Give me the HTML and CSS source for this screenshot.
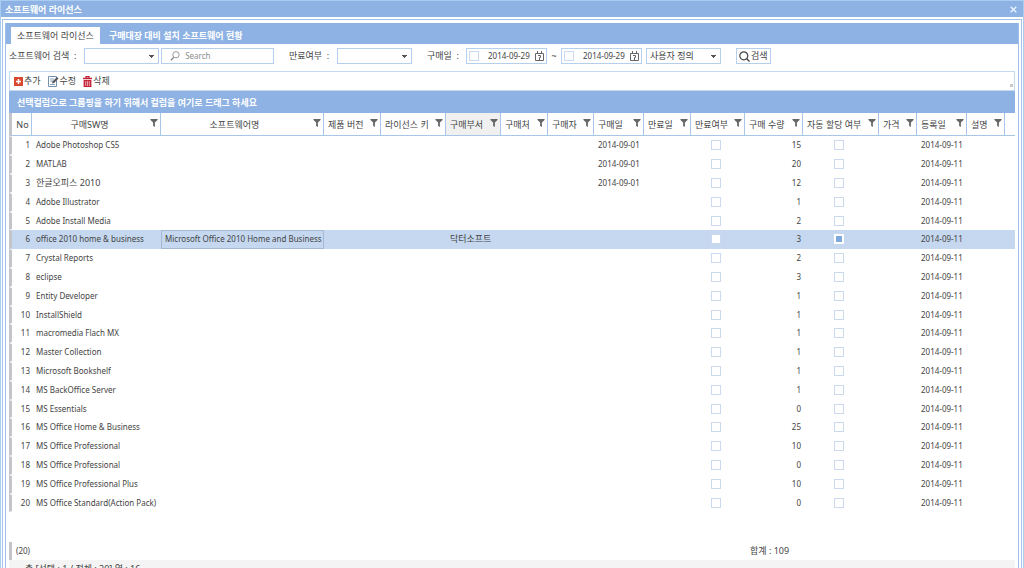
FILE: index.html
```html
<!DOCTYPE html>
<html lang="ko">
<head>
<meta charset="utf-8">
<title>소프트웨어 라이선스</title>
<link rel="stylesheet" href="styles.css">
</head>
<body>
<svg class="defs" aria-hidden="true">
  <symbol id="funnel" viewBox="0 0 8 9"><path d="M0 0h8v1L5 4v5L3 8V4L0 1z" fill="#666"/></symbol>
  <symbol id="calendar" viewBox="0 0 9 10"><path d="M.5 2.500h8v7h-8zM2.500 0v3M6.500 0v3M3 4.500h2.500v2H4.500V9" fill="none" stroke="#666"/></symbol>
</svg>
<div class="window">
  <header class="titlebar">
    <h1>소프트웨어 라이선스</h1>
    <button class="close" aria-label="닫기"><svg width="7" height="7" viewBox="0 0 7 7"><path d="M.7.7l5.600 5.600M6.300.7L.7 6.300" stroke="#e6f2ff" stroke-width="1.500"/></svg></button>
  </header>
  <div class="frame">
    <main class="panel">
      <nav class="tabs">
        <button class="tab active">소프트웨어 라이선스</button>
        <button class="tab">구매대장 대비 설치 소프트웨어 현황</button>
      </nav>
      <form class="filters">
        <label class="name" for="kind">소프트웨어 검색 &nbsp;:</label>
        <select id="kind" class="box kind"><option></option></select>
        <span class="box search">
          <svg width="12" height="12" viewBox="0 0 12 12"><circle cx="7" cy="4.500" r="3.700" fill="none" stroke="#888"/><path d="M4.500 7.500L1 11" stroke="#888" stroke-width="1.500"/></svg>
          <input type="text" aria-label="Search" placeholder="Search">
        </span>
        <label class="name expiry" for="expired">만료여부 &nbsp;:</label>
        <select id="expired" class="box kind"><option></option></select>
        <span class="name bought">구매일 &nbsp;:</span>
        <span class="box date"><input type="checkbox" aria-label="시작일 사용"><input type="text" aria-label="시작일" value="2014-09-29"><svg width="9" height="10"><use href="#calendar"/></svg></span>
        <span class="tilde">~</span>
        <span class="box date"><input type="checkbox" aria-label="종료일 사용"><input type="text" aria-label="종료일" value="2014-09-29"><svg width="9" height="10"><use href="#calendar"/></svg></span>
        <select class="box range" aria-label="기간"><option>사용자 정의</option></select>
        <button type="button" class="box find"><svg width="11" height="11" viewBox="0 0 11 11"><circle cx="4.800" cy="4.800" r="4" fill="none" stroke="#444" stroke-width="1.200"/><path d="M7.500 7.500l3 3" stroke="#444" stroke-width="1.400"/></svg>검색</button>
      </form>
      <div class="toolbar">
        <button><svg width="9" height="9" viewBox="0 0 9 9"><path d="M0 0h9v9H0z" fill="#d9472f"/><path d="M4.500 2v5M2 4.500h5" stroke="#fff" stroke-width="1.500"/></svg>추가</button>
        <button><svg width="11" height="11" viewBox="0 0 11 11"><path d="M.5.5h8v10h-8z" fill="#fff" stroke="#7590ad"/><path d="M2 3h4M2 5h3M2 8.500h5" stroke="#8ba4bd"/><path d="M4 7.500l.5-2L9 1l1.500 1.500L6 7z" fill="#555"/></svg>수정</button>
        <button><svg width="9" height="11" viewBox="0 0 9 11"><path d="M0 2.500h9M3 2V.6h3V2" fill="none" stroke="#c3243a" stroke-width="1.300"/><path d="M.6 4h7.800v7H.6z" fill="#c3243a"/><path d="M2.700 5v5M4.500 5v5M6.300 5v5" stroke="#f3c4ca" stroke-width=".8"/></svg>삭제</button>
        <span class="grip"></span>
      </div>
      <div class="group">선택컬럼으로 그룹핑을 하기 위해서 컬럼을 여기로 드래그 하세요</div>
      <table class="grid">
        <colgroup><col class="w-no"><col class="w-sw"><col class="w-name"><col class="w-ver"><col class="w-key"><col class="w-dept"><col class="w-from"><col class="w-who"><col class="w-day"><col class="w-exp"><col class="w-flag"><col class="w-qty"><col class="w-auto"><col class="w-price"><col class="w-day"><col class="w-note"><col></colgroup>
        <thead>
          <tr>
            <th><div>No</div></th>
            <th><div>구매SW명<svg><use href="#funnel"/></svg></div></th>
            <th><div>소프트웨어명<svg><use href="#funnel"/></svg></div></th>
            <th><div>제품 버전<svg><use href="#funnel"/></svg></div></th>
            <th><div>라이선스 키<svg><use href="#funnel"/></svg></div></th>
            <th class="hover"><div>구매부서<svg><use href="#funnel"/></svg></div></th>
            <th><div>구매처<svg><use href="#funnel"/></svg></div></th>
            <th><div>구매자<svg><use href="#funnel"/></svg></div></th>
            <th><div>구매일<svg><use href="#funnel"/></svg></div></th>
            <th><div>만료일<svg><use href="#funnel"/></svg></div></th>
            <th><div>만료여부<svg><use href="#funnel"/></svg></div></th>
            <th><div>구매 수량<svg><use href="#funnel"/></svg></div></th>
            <th><div>자동 할당 여부<svg><use href="#funnel"/></svg></div></th>
            <th><div>가격<svg><use href="#funnel"/></svg></div></th>
            <th><div>등록일<svg><use href="#funnel"/></svg></div></th>
            <th><div>설명<svg><use href="#funnel"/></svg></div></th>
            <th></th>
          </tr>
        </thead>
        <tbody>
          <tr><td>1<td>Adobe Photoshop CS5<td><td><td><td><td><td><td>2014-09-01<td><td><input type="checkbox" aria-label="만료여부"><td>15<td><input type="checkbox" aria-label="자동 할당 여부"><td><td>2014-09-11<td><td></tr>
          <tr><td>2<td>MATLAB<td><td><td><td><td><td><td>2014-09-01<td><td><input type="checkbox" aria-label="만료여부"><td>20<td><input type="checkbox" aria-label="자동 할당 여부"><td><td>2014-09-11<td><td></tr>
          <tr><td>3<td class="hangul">한글오피스 2010<td><td><td><td><td><td><td>2014-09-01<td><td><input type="checkbox" aria-label="만료여부"><td>12<td><input type="checkbox" aria-label="자동 할당 여부"><td><td>2014-09-11<td><td></tr>
          <tr><td>4<td>Adobe Illustrator<td><td><td><td><td><td><td><td><td><input type="checkbox" aria-label="만료여부"><td>1<td><input type="checkbox" aria-label="자동 할당 여부"><td><td>2014-09-11<td><td></tr>
          <tr><td>5<td>Adobe Install Media<td><td><td><td><td><td><td><td><td><input type="checkbox" aria-label="만료여부"><td>2<td><input type="checkbox" aria-label="자동 할당 여부"><td><td>2014-09-11<td><td></tr>
          <tr class="selected"><td>6<td>office 2010 home &amp; business<td class="focus">Microsoft Office 2010 Home and Business<td><td><td class="hangul">닥터소프트<td><td><td><td><td><input type="checkbox" aria-label="만료여부"><td>3<td><input type="checkbox" checked aria-label="자동 할당 여부"><td><td>2014-09-11<td><td></tr>
          <tr><td>7<td>Crystal Reports<td><td><td><td><td><td><td><td><td><input type="checkbox" aria-label="만료여부"><td>2<td><input type="checkbox" aria-label="자동 할당 여부"><td><td>2014-09-11<td><td></tr>
          <tr><td>8<td>eclipse<td><td><td><td><td><td><td><td><td><input type="checkbox" aria-label="만료여부"><td>3<td><input type="checkbox" aria-label="자동 할당 여부"><td><td>2014-09-11<td><td></tr>
          <tr><td>9<td>Entity Developer<td><td><td><td><td><td><td><td><td><input type="checkbox" aria-label="만료여부"><td>1<td><input type="checkbox" aria-label="자동 할당 여부"><td><td>2014-09-11<td><td></tr>
          <tr><td>10<td>InstallShield<td><td><td><td><td><td><td><td><td><input type="checkbox" aria-label="만료여부"><td>1<td><input type="checkbox" aria-label="자동 할당 여부"><td><td>2014-09-11<td><td></tr>
          <tr><td>11<td>macromedia Flach MX<td><td><td><td><td><td><td><td><td><input type="checkbox" aria-label="만료여부"><td>1<td><input type="checkbox" aria-label="자동 할당 여부"><td><td>2014-09-11<td><td></tr>
          <tr><td>12<td>Master Collection<td><td><td><td><td><td><td><td><td><input type="checkbox" aria-label="만료여부"><td>1<td><input type="checkbox" aria-label="자동 할당 여부"><td><td>2014-09-11<td><td></tr>
          <tr><td>13<td>Microsoft Bookshelf<td><td><td><td><td><td><td><td><td><input type="checkbox" aria-label="만료여부"><td>1<td><input type="checkbox" aria-label="자동 할당 여부"><td><td>2014-09-11<td><td></tr>
          <tr><td>14<td>MS BackOffice Server<td><td><td><td><td><td><td><td><td><input type="checkbox" aria-label="만료여부"><td>1<td><input type="checkbox" aria-label="자동 할당 여부"><td><td>2014-09-11<td><td></tr>
          <tr><td>15<td>MS Essentials<td><td><td><td><td><td><td><td><td><input type="checkbox" aria-label="만료여부"><td>0<td><input type="checkbox" aria-label="자동 할당 여부"><td><td>2014-09-11<td><td></tr>
          <tr><td>16<td>MS Office Home &amp; Business<td><td><td><td><td><td><td><td><td><input type="checkbox" aria-label="만료여부"><td>25<td><input type="checkbox" aria-label="자동 할당 여부"><td><td>2014-09-11<td><td></tr>
          <tr><td>17<td>MS Office Professional<td><td><td><td><td><td><td><td><td><input type="checkbox" aria-label="만료여부"><td>10<td><input type="checkbox" aria-label="자동 할당 여부"><td><td>2014-09-11<td><td></tr>
          <tr><td>18<td>MS Office Professional<td><td><td><td><td><td><td><td><td><input type="checkbox" aria-label="만료여부"><td>0<td><input type="checkbox" aria-label="자동 할당 여부"><td><td>2014-09-11<td><td></tr>
          <tr><td>19<td>MS Office Professional Plus<td><td><td><td><td><td><td><td><td><input type="checkbox" aria-label="만료여부"><td>10<td><input type="checkbox" aria-label="자동 할당 여부"><td><td>2014-09-11<td><td></tr>
          <tr><td>20<td>MS Office Standard(Action Pack)<td><td><td><td><td><td><td><td><td><input type="checkbox" aria-label="만료여부"><td>0<td><input type="checkbox" aria-label="자동 할당 여부"><td><td>2014-09-11<td><td></tr>
        </tbody>
      </table>
      <div class="summary"><span class="count">(20)</span><span class="total">합계 : 109</span></div>
      <footer class="status">총 [선택 : 1 / 전체 : 20] 열 : 16</footer>
    </main>
  </div>
</div>
</body>
</html>
```
FILE: styles.css
```css
* { box-sizing: border-box; }
body {
  margin: 0;
  height: 100vh;
  overflow: hidden;
  background: #fff;
  color: #444;
  font: 9px/12px "Noto Sans", "Noto Sans CJK KR", sans-serif;
}
button, input, select { font: inherit; color: inherit; margin: 0; }
button { border: 0; padding: 0; background: none; white-space: nowrap; }
.defs { position: absolute; width: 0; height: 0; }
.window { border: 1px solid #a9cdf0; border-width: 1px 1px 0; }
.titlebar {
  display: flex;
  align-items: center;
  justify-content: space-between;
  height: 16px;
  padding: 1px 6px 0 4px;
  background: #8db2e3;
  color: #fff;
}
.titlebar h1 { margin: 0; font-size: 9px; font-weight: 700; }
.close { display: flex; }
.frame {
  margin: 2px 1px 0;
  padding: 3px 2px 0;
  border: 1px solid #a3c3ea;
  border-bottom: 0;
}
.panel { border: 1px solid #9dbfe8; border-width: 0 1px; }
.tabs { display: flex; align-items: flex-end; height: 21px; padding-left: 5px; background: #8db2e3; }
.tab { height: 17px; padding: 1px 9px 0 5px; color: #fff; font-weight: 700; }
.tab.active { padding: 1px 6px 0; margin-right: 4px; background: #fff; color: #444; font-weight: 400; }
.filters { display: flex; align-items: center; height: 27px; padding: 0 3px 3px; }
.name { width: 75px; white-space: nowrap; }
.expiry { width: 48px; margin-left: 15px; }
.bought { width: 39px; margin-left: 15px; }
.box { display: flex; align-items: center; height: 16px; border: 1px solid #b5cfee; background: #fff; }
select.box {
  appearance: none;
  border-radius: 0;
  padding: 0 12px 0 3px;
  background: linear-gradient(#555, #555) right 4px top 6px / 5px 1px no-repeat, linear-gradient(#555, #555) right 5px top 7px / 3px 1px no-repeat, linear-gradient(#555, #555) right 6px top 8px / 1px 1px no-repeat, #fff;
}
.kind { width: 75px; }
.search { width: 113px; margin-left: 2px; padding-left: 8px; gap: 5px; }
.search input, .date input[type="text"] { min-width: 0; width: 100%; border: 0; padding: 0; background: none; outline: 0; font-size: 8px; }
.search input::placeholder { color: #8d8d8d; }
.date { width: 81px; padding: 0 2px; gap: 9px; }
.date svg { flex: none; margin-left: -7px; }
.tilde { width: 14px; text-align: center; }
.range { width: 75px; margin-left: 4px; }
.find { margin-left: 15px; padding: 0 2px; gap: 1px; }
input[type="checkbox"] {
  appearance: none;
  display: block;
  flex: none;
  width: 10px;
  height: 10px;
  border: 1px solid #ccdaee;
  background: #fff;
}
input[type="checkbox"]:checked { border: 2px solid #fff; background: #7fa8dc; }
.toolbar {
  display: flex;
  align-items: center;
  gap: 7px;
  height: 20px;
  margin: 0 3px;
  padding: 0 4px;
  border: 1px solid #c5d9f1;
}
.toolbar button { display: flex; align-items: center; gap: 1px; }
.grip { width: 3px; height: 3px; margin: 8px -3px 0 auto; background: #c8c8c8; }
.group { height: 22px; margin: 0 3px; padding: 1px 8px 0; background: #8db2e3; color: #fff; font-weight: 700; line-height: 22px; }
.grid { table-layout: fixed; width: calc(100% - 6px); margin: 0 3px; border-collapse: separate; border-spacing: 0; }
.grid th { height: 23px; padding: 0; border: 1px solid #a9c6ea; border-width: 0 1px 1px 0; font-weight: 400; }
.grid th:last-child { border-right: 0; }
.grid th div { display: flex; align-items: center; justify-content: center; padding: 1px 2px 0 4px; white-space: nowrap; }
.grid th svg { flex: none; width: 8px; height: 8px; margin: 0 0 3px auto; }
.grid th:nth-child(2) div, .grid th:nth-child(3) div { padding-left: 30%; }
.grid .hover { background: #f0f0f0; }
.grid td { height: 19px; padding: 0 4px 1px; white-space: nowrap; border: 1px solid transparent; border-width: 1px 0; font-size: 8px; line-height: 12px; }
.grid tr:nth-child(5n) td { height: 18px; }
.grid .hangul { font-size: 9px; }
.grid th:first-child, .grid td:first-child, .summary { border-left: 3px solid #c3c5ca; }
.grid td:first-child { padding: 0 2px 1px 0; text-align: right; }
.grid td:nth-child(11), .grid td:nth-child(13) { padding: 0 8px 1px 4px; }
.grid td:nth-child(11) input, .grid td:nth-child(13) input { margin: 0 auto; }
.grid td:nth-child(12) { padding-right: 2px; text-align: right; }
.selected { background: #c5d8f0; }
.grid .selected .focus { padding: 0 1px 1px 3px; border: 1px solid #a6b8d2; }
.w-no { width: 23px; }
.w-sw { width: 129px; }
.w-name { width: 163px; }
.w-ver { width: 57px; }
.w-key { width: 65px; }
.w-dept { width: 55px; }
.w-from { width: 47px; }
.w-who { width: 46px; }
.w-day { width: 50px; }
.w-exp { width: 47px; }
.w-flag { width: 54px; }
.w-qty { width: 58px; }
.w-auto { width: 76px; }
.w-price, .w-note { width: 38px; }
.summary { display: flex; align-items: center; height: 18px; margin: 30px 3px 0; padding: 0 4px; }
.count { width: 734px; font-size: 8px; }
.status { margin: 0 3px; padding: 3px 16px; background: #f4f4f4; }
```
